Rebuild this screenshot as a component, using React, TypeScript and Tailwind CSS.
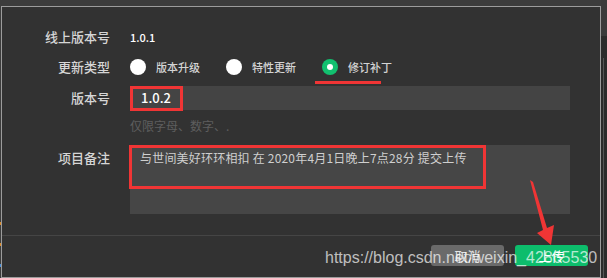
import React from 'react';

const CJK = "font-['Noto_Sans_CJK_SC','Noto_Sans',sans-serif]";

function Radio({ label, checked }: { label: string; checked?: boolean }) {
  return (
    <div className="flex items-center gap-[10px]">
      {checked ? (
        <span className="w-4 h-4 rounded-full bg-[#12c06f] flex items-center justify-center">
          <span className="w-[6px] h-[6px] rounded-full bg-white" />
        </span>
      ) : (
        <span className="w-4 h-4 rounded-full bg-white" />
      )}
      <span className="text-[11px] leading-4 font-medium text-[#d4d4d4]">{label}</span>
    </div>
  );
}

function Label({ children, top }: { children: React.ReactNode; top?: boolean }) {
  return (
    <div className={`text-right text-[13px] font-medium text-[#d6d6d6] ${top ? 'pt-[5px] leading-4' : 'self-center leading-4'}`}>
      {children}
    </div>
  );
}

export default function App() {
  return (
    <div className={`relative w-[607px] h-[278px] overflow-hidden bg-[#3c3c3c] flex ${CJK}`}>
      {/* left edge */}
      <div className="w-px flex flex-col pt-[222px] gap-[18px]">
        <span className="h-[3px] bg-[#d98a2b]" />
        <span className="h-[3px] bg-[#d98a2b]" />
        <span className="h-[3px] bg-[#4a8fd8]" />
      </div>

      {/* dialog */}
      <div className="mt-[6px] w-[600px] h-[272px] border border-[#9c9c9c] bg-[#323232] flex flex-col">
        <div className="pt-[15px] pr-[30px] grid grid-cols-[108px_1fr] gap-x-[20px]">
          <Label>线上版本号</Label>
          <div className="h-[30px] flex items-center text-[11px] font-medium text-white">1.0.1</div>

          <Label>更新类型</Label>
          <div className="h-[30px] flex items-center gap-[26px]">
            <Radio label="版本升级" />
            <Radio label="特性更新" />
            <Radio label="修订补丁" checked />
          </div>

          <div className="col-span-2 h-[4px]" />

          <Label>版本号</Label>
          <div className="h-[24px] bg-[#444444] flex items-center pl-[11px] text-[13px] font-medium text-white">1.0.2</div>

          <div />
          <div className="mt-[6px] h-[20px] leading-[20px] text-[12px] text-[#5e5e5e]">仅限字母、数字、.</div>

          <div className="col-span-2 h-[9px]" />

          <Label top>项目备注</Label>
          <div className="h-[69px] bg-[#464646] pl-[10px] pt-[5px] text-[12px] leading-4 tracking-[0.2px] text-[#cfcfcf]">
            与世间美好环环相扣 在 2020年4月1日晚上7点28分 提交上传
          </div>
        </div>

        <div className="mt-[21px] border-t border-[#454545] flex justify-end gap-[11px] pr-[12px] pt-[9px]">
          <button className="w-[73px] h-[21px] rounded-[3px] bg-[#6a6a6a] text-[13px] text-[#e4e4e4] leading-[21px]">取消</button>
          <button className="w-[73px] h-[21px] rounded-[3px] bg-[#0dbd6c] text-[13px] text-white leading-[21px]">上传</button>
        </div>
      </div>

      {/* right edge */}
      <div className="flex-1 flex flex-col">
        <div className="h-[36px] bg-[#3a3a3a]" />
        <div className="flex-1 bg-[#2b2b2b] flex pl-[2px] pt-[22px]">
          <span className="w-px h-full bg-[#555555]" />
        </div>
      </div>

      {/* annotations */}
      <span className="absolute left-[315px] top-[81px] w-[66px] h-[3px] bg-[#f03535]" />
      <span className="absolute left-[130px] top-[86px] w-[53px] h-[25px] border-[3px] border-[#f03535]" />
      <span className="absolute left-[129px] top-[145px] w-[357px] h-[44px] border-[3px] border-[#f03535]" />
      <svg className="absolute left-[525px] top-[175px]" width="35" height="75" viewBox="0 0 35 75">
        <polygon points="5,5 8,7 22,53 29,50 26,70 12,58 18,55" fill="#f03535" />
      </svg>

      {/* watermark */}
      <div className="absolute left-[325px] top-[250px] text-[16px] leading-4 text-white/70 font-['Liberation_Sans',Arial,sans-serif] whitespace-nowrap">
        https://blog.csdn.net/weixin_42865530
      </div>
    </div>
  );
}
